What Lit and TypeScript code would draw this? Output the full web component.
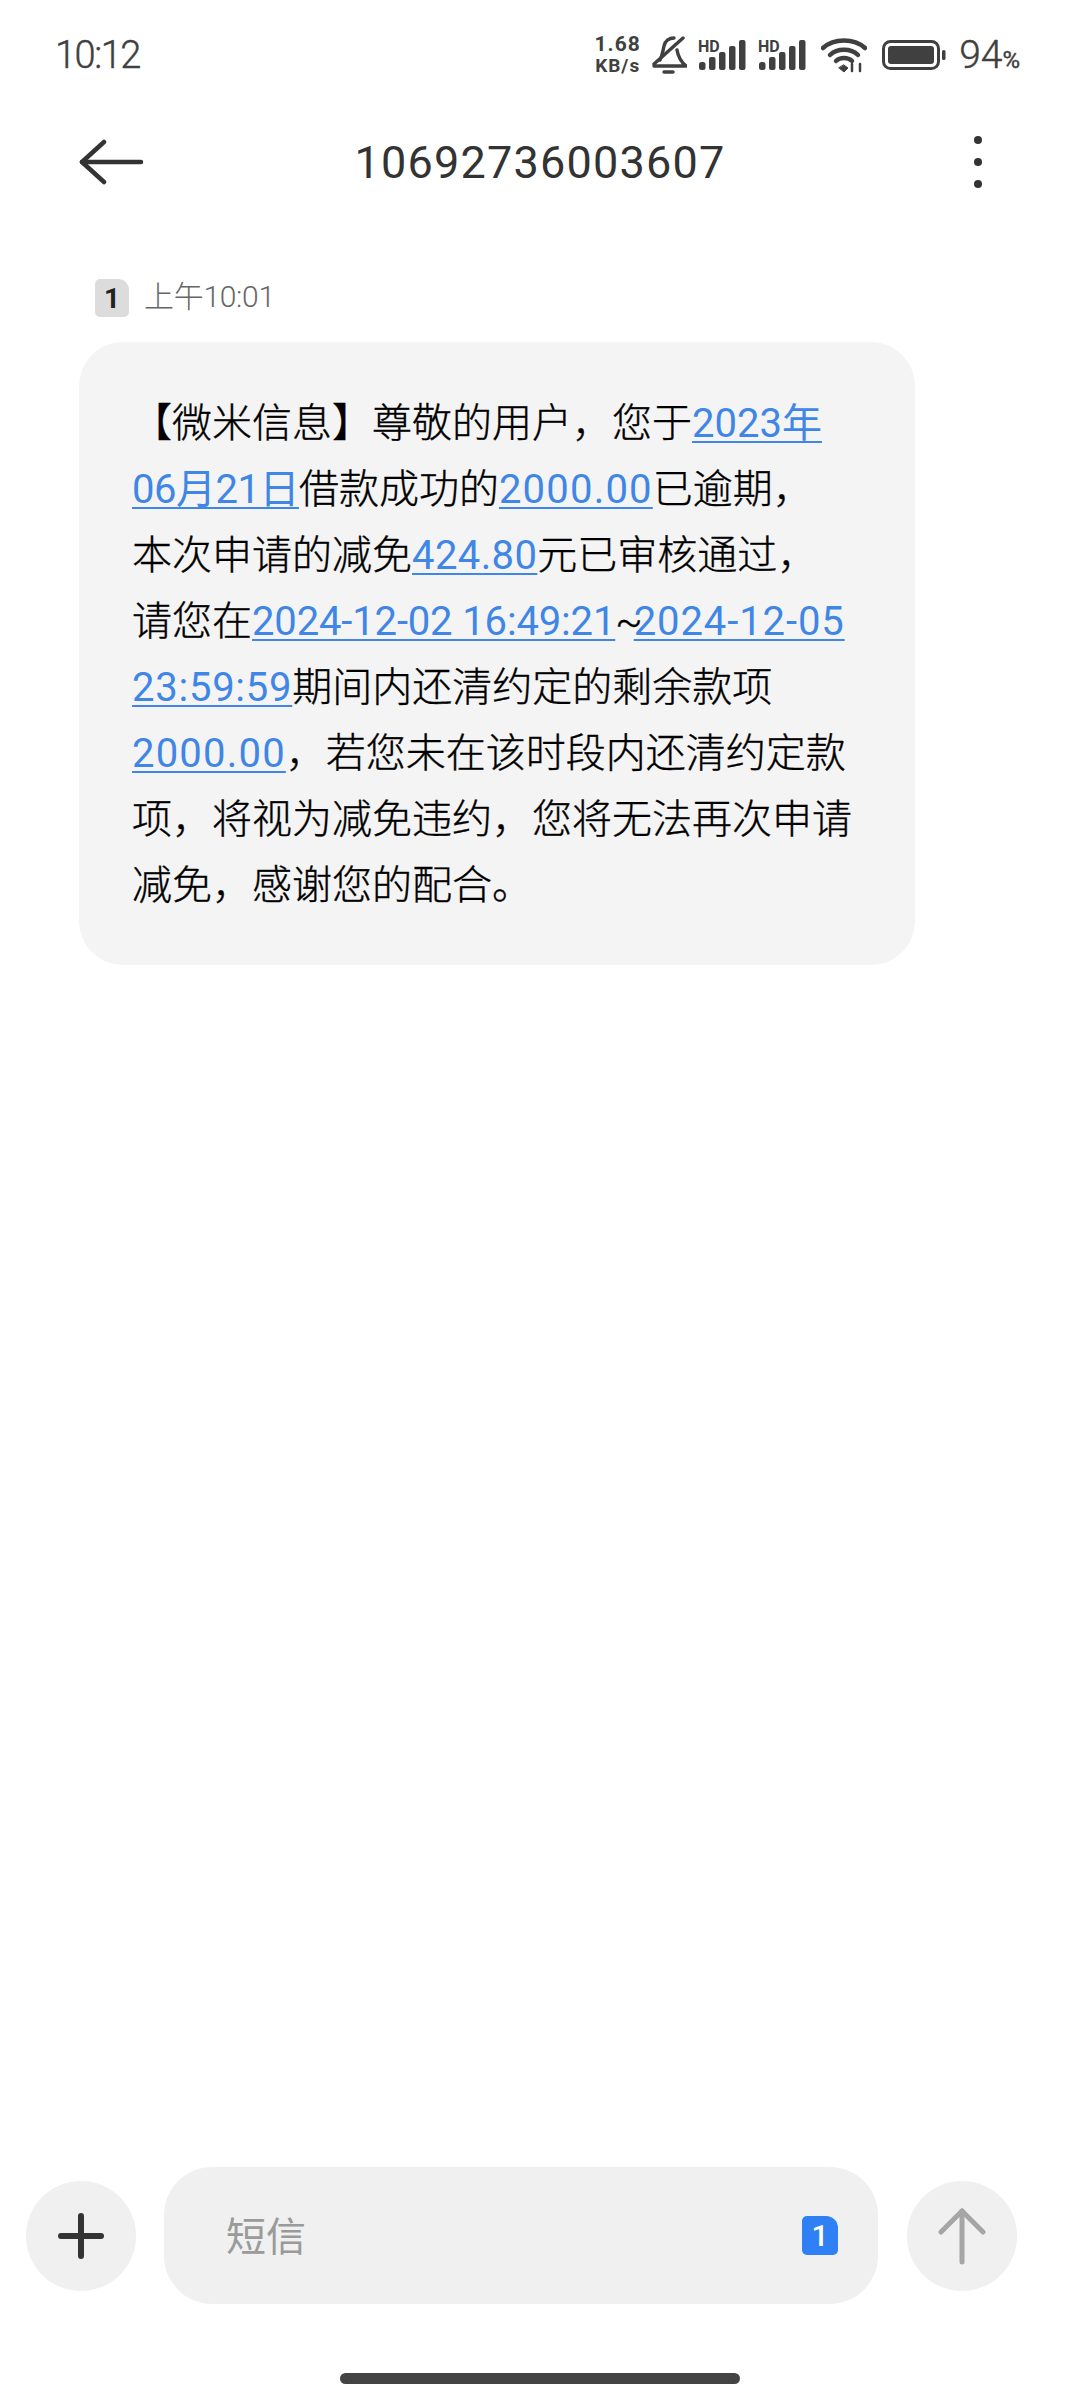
import { LitElement, html, css } from "lit";
import { customElement } from "lit/decorators.js";

const signal = html`<svg class="sig" width="50" height="30" viewBox="0 0 50 30">
  <text x="0" y="11.500" class="hd">HD</text>
  <rect x="1" y="22" width="6.500" height="8" rx="2.5" fill="#404040"></rect>
  <rect x="11" y="17" width="6.500" height="13" rx="2" fill="#404040"></rect>
  <rect x="21" y="12" width="6.500" height="18" rx="2" fill="#404040"></rect>
  <rect x="31" y="6" width="6.500" height="24" rx="2" fill="#404040"></rect>
  <rect x="41" y="0" width="6.500" height="30" rx="2" fill="#404040"></rect>
</svg>`;

@customElement("app-root")
export class AppRoot extends LitElement {
  static styles = css`
    :host {
      display: flex;
      flex-direction: column;
      width: 1080px;
      height: 2400px;
      background: #fff;
      font-family: Roboto, "Noto Sans CJK SC", sans-serif;
      overflow: hidden;
    }
    .status {
      height: 110px;
      flex: none;
      display: flex;
      align-items: center;
      padding: 0 60px 0 55px;
      color: #404040;
      box-sizing: border-box;
    }
    .clock {
      font-size: 38px;
      font-weight: 300;
      letter-spacing: -1.5px;
      margin-right: auto;
      -webkit-text-stroke: 0.4px #404040;
    }
    .speed {
      font-size: 19px;
      font-weight: 700;
      line-height: 22px;
      text-align: center;
      width: 47px;
      margin-right: 10px;
    }
    .speed span {
      display: block;
      letter-spacing: 1px;
    }
    .speed .rate {
      font-size: 21px;
    }
    .bell {
      margin-right: 11px;
    }
    .sig {
      margin-right: 10px;
      overflow: visible;
    }
    .hd {
      font-size: 16px;
      font-weight: 700;
      fill: #404040;
      font-family: Roboto, sans-serif;
    }
    .wifi {
      margin: 0 15px 0 3px;
    }
    .batt {
      margin-right: 13px;
    }
    .pct {
      font-size: 39px;
      font-weight: 300;
      -webkit-text-stroke: 0.4px #404040;
    }
    .pct small {
      font-size: 24px;
      font-weight: 400;
    }

    .header {
      height: 104px;
      flex: none;
      display: grid;
      grid-template-columns: 1fr auto 1fr;
      align-items: center;
      padding: 0 78px;
    }
    .title {
      font-size: 45px;
      letter-spacing: 1.2px;
      color: #333;
      font-weight: 400;
    }
    .dots {
      display: flex;
      flex-direction: column;
      gap: 14px;
      justify-self: end;
      margin-right: 20px;
    }
    .dots i {
      display: block;
      width: 8px;
      height: 8px;
      border-radius: 50%;
      background: #333;
    }

    .meta {
      display: flex;
      align-items: center;
      gap: 15px;
      margin: 65px 0 0 95px;
      height: 38px;
      font-size: 30px;
      font-weight: 300;
      letter-spacing: -0.3px;
      color: #666;
    }
    .meta .when {
      padding-bottom: 8px;
    }
    .sim {
      width: 34px;
      height: 38px;
      background: #dcdcdc;
      border-radius: 5px 11px 5px 5px;
      color: #222;
      font-size: 28px;
      font-weight: 700;
      display: flex;
      align-items: center;
      justify-content: center;
    }

    .bubble {
      margin: 25px 0 0 79px;
      width: 836px;
      height: 623px;
      box-sizing: border-box;
      padding: 49px 30px 0 53px;
      background: #f4f4f4;
      border-radius: 44px;
      font-size: 40px;
      line-height: 66px;
      font-weight: 300;
      color: #000;
      white-space: nowrap;
      -webkit-text-stroke: 0.35px #000;
    }
    .bubble a {
      color: #3f86e6;
      font-weight: 400;
      -webkit-text-stroke: 0;
      text-decoration: underline;
      text-decoration-thickness: 2px;
      text-underline-offset: 4px;
    }
    .bubble a.amt {
      letter-spacing: 1.2px;
    }
    .bubble a.small {
      letter-spacing: 0.4px;
    }
    .bubble a.clockish {
      letter-spacing: 0.75px;
    }
    .bubble a.tight {
      letter-spacing: -0.5px;
    }
    .bubble a.range {
      letter-spacing: -0.15px;
    }
    .bubble a.end {
      letter-spacing: 0.9px;
    }
    .bubble .tilde {
      letter-spacing: -9px;
    }

    .composer {
      margin-top: auto;
      display: flex;
      align-items: center;
      padding: 0 62px 0 26px;
      height: 137px;
      flex: none;
    }
    .round {
      width: 110px;
      height: 110px;
      border-radius: 50%;
      background: #f0f0f0;
      display: flex;
      align-items: center;
      justify-content: center;
      flex: none;
    }
    .input {
      width: 714px;
      height: 137px;
      margin: 0 29px 0 28px;
      box-sizing: border-box;
      padding: 0 40px 0 62px;
      background: #f0f0f0;
      border-radius: 48px;
      display: flex;
      align-items: center;
      justify-content: space-between;
      font-size: 40px;
      color: #9a9a9a;
      flex: none;
    }
    .hint {
      padding-bottom: 3px;
    }
    .simblue {
      width: 36px;
      height: 39px;
      background: #2f7ff5;
      border-radius: 5px 12px 5px 5px;
      color: #fff;
      font-size: 30px;
      font-weight: 500;
      display: flex;
      align-items: center;
      justify-content: center;
    }
    .home {
      height: 96px;
      flex: none;
      display: flex;
      justify-content: center;
      align-items: flex-start;
      padding-top: 69px;
      box-sizing: border-box;
    }
    .home i {
      display: block;
      width: 400px;
      height: 11px;
      border-radius: 6px;
      background: #444;
    }
  `;

  render() {
    return html`
      <div class="status">
        <span class="clock">10:12</span>
        <div class="speed"><span class="rate">1.68</span><span>KB/s</span></div>
        <svg class="bell" width="36" height="38" viewBox="0 0 36 38" fill="none" stroke="#404040" stroke-width="3.400" stroke-linecap="round" stroke-linejoin="round">
          <path d="M9 24C11 20 12 15 13 10C14 5 18 2 23 2"></path>
          <path d="M26 14C27 20 29 25 35 30H3"></path>
          <path d="M32 2L3 28"></path>
          <path d="M13 36H22"></path>
        </svg>
        ${signal}${signal}
        <svg class="wifi" width="46" height="36" viewBox="0 0 46 36" fill="none" stroke="#404040" stroke-width="4.500" stroke-linecap="round">
          <path d="M2 11C13 1 33 1 44 11"></path>
          <path d="M9 18C16 11 30 11 37 18"></path>
          <path d="M15 24C19 20 27 20 31 24"></path>
          <path d="M18 31L23 35L27 31L23 28Z" fill="#404040" stroke-width="1"></path>
          <path d="M31 27V34M39 27V34" stroke-width="2.500"></path>
        </svg>
        <svg class="batt" width="64" height="30" viewBox="0 0 64 30">
          <rect x="1.500" y="1.500" width="55" height="27" rx="7" fill="none" stroke="#404040" stroke-width="3"></rect>
          <rect x="6" y="6" width="46" height="18" rx="3" fill="#404040"></rect>
          <rect x="60" y="10" width="3.500" height="10" rx="1.500" fill="#404040"></rect>
        </svg>
        <span class="pct">94<small>%</small></span>
      </div>

      <div class="header">
        <svg width="66" height="46" viewBox="0 0 66 46" fill="none" stroke="#333" stroke-width="4.500" stroke-linecap="round" stroke-linejoin="round">
          <path d="M4 23H63"></path>
          <path d="M26 3L4 23L26 43"></path>
        </svg>
        <span class="title">10692736003607</span>
        <div class="dots"><i></i><i></i><i></i></div>
      </div>

      <div class="meta"><span class="sim">1</span><span class="when">上午10:01</span></div>

      <div class="bubble">
        【微米信息】尊敬的用户，您于<a>2023年</a><br />
        <a class="tight">06月21日</a>借款成功的<a class="amt">2000.00</a>已逾期，<br />
        本次申请的减免<a class="small">424.80</a>元已审核通过，<br />
        请您在<a class="range">2024-12-02 16:49:21</a><span class="tilde">~</span><a class="end">2024-12-05</a><br />
        <a class="clockish">23:59:59</a>期间内还清约定的剩余款项<br />
        <a class="amt">2000.00</a>，若您未在该时段内还清约定款<br />
        项，将视为减免违约，您将无法再次申请<br />
        减免，感谢您的配合。
      </div>

      <div class="composer">
        <div class="round">
          <svg width="46" height="46" viewBox="0 0 46 46" stroke="#333" stroke-width="6" stroke-linecap="round">
            <path d="M23 3V43M3 23H43"></path>
          </svg>
        </div>
        <div class="input"><span class="hint">短信</span><span class="simblue">1</span></div>
        <div class="round">
          <svg width="48" height="58" viewBox="0 0 48 58" fill="none" stroke="#a6a6a6" stroke-width="5" stroke-linecap="round" stroke-linejoin="round">
            <path d="M24 4V55"></path>
            <path d="M3 25L24 4L45 25"></path>
          </svg>
        </div>
      </div>
      <div class="home"><i></i></div>
    `;
  }
}
